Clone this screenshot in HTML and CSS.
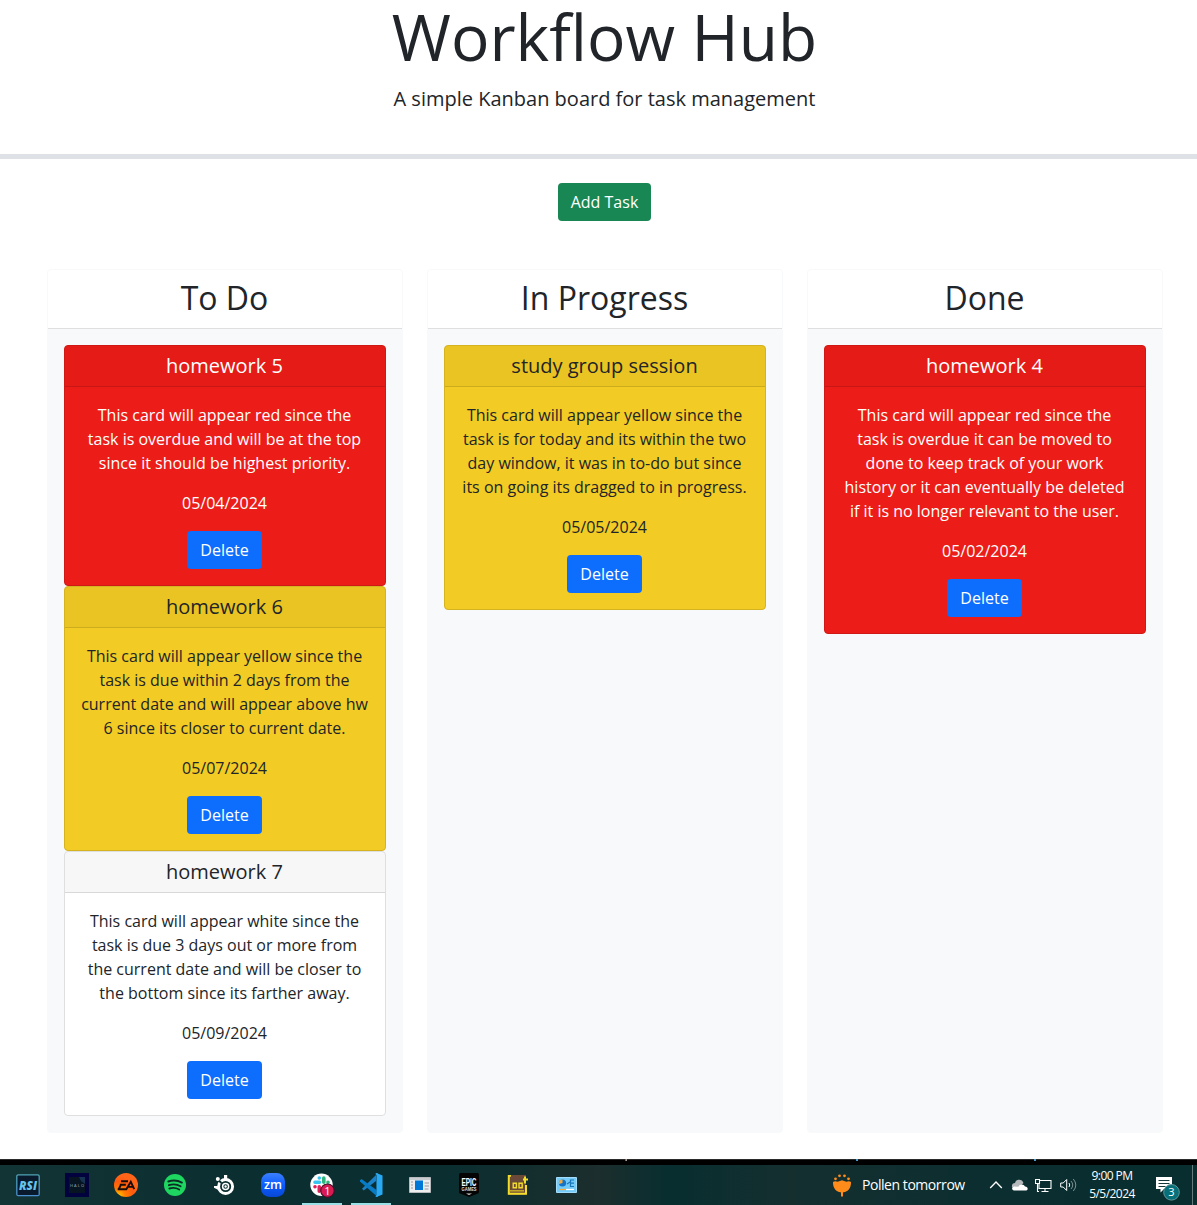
FILE: index.html
```html
<!DOCTYPE html>
<html lang="en">
<head>
<meta charset="utf-8">
<title>Workflow Hub</title>
<link rel="stylesheet" href="styles.css">
</head>
<body>
<main class="page">
  <header class="hero">
    <h1>Workflow Hub</h1>
    <p>A simple Kanban board for task management</p>
  </header>
  <div class="actions"><button class="btn btn-add">Add Task</button></div>
  <section class="board">
    <div class="lane">
      <h2>To Do</h2>
      <div class="lane-body">
        <article class="card overdue">
          <h4>homework 5</h4>
          <div class="card-body">
            <p>This card will appear red since the<br>task is overdue and will be at the top<br>since it should be highest priority.</p>
            <p>05/04/2024</p>
            <button class="btn btn-delete">Delete</button>
          </div>
        </article>
        <article class="card soon">
          <h4>homework 6</h4>
          <div class="card-body">
            <p>This card will appear yellow since the<br>task is due within 2 days from the<br>current date and will appear above hw<br>6 since its closer to current date.</p>
            <p>05/07/2024</p>
            <button class="btn btn-delete">Delete</button>
          </div>
        </article>
        <article class="card">
          <h4>homework 7</h4>
          <div class="card-body">
            <p>This card will appear white since the<br>task is due 3 days out or more from<br>the current date and will be closer to<br>the bottom since its farther away.</p>
            <p>05/09/2024</p>
            <button class="btn btn-delete">Delete</button>
          </div>
        </article>
      </div>
    </div>
    <div class="lane">
      <h2>In Progress</h2>
      <div class="lane-body">
        <article class="card soon">
          <h4>study group session</h4>
          <div class="card-body">
            <p>This card will appear yellow since the<br>task is for today and its within the two<br>day window, it was in to-do but since<br>its on going its dragged to in progress.</p>
            <p>05/05/2024</p>
            <button class="btn btn-delete">Delete</button>
          </div>
        </article>
      </div>
    </div>
    <div class="lane">
      <h2>Done</h2>
      <div class="lane-body">
        <article class="card overdue">
          <h4>homework 4</h4>
          <div class="card-body">
            <p>This card will appear red since the<br>task is overdue it can be moved to<br>done to keep track of your work<br>history or it can eventually be deleted<br>if it is no longer relevant to the user.</p>
            <p>05/02/2024</p>
            <button class="btn btn-delete">Delete</button>
          </div>
        </article>
      </div>
    </div>
  </section>
</main>
<footer class="taskbar">
  <div class="apps">
    <div class="app"><svg width="24" height="24" viewBox="0 0 24 24"><defs><linearGradient id="rsi" x2="0" y2="1"><stop offset="0" stop-color="#4fa3b5"/><stop offset="1" stop-color="#4a8fd0"/></linearGradient></defs><rect x=".8" y="1.8" width="22.4" height="20.9" rx="1.5" fill="#081a2c" stroke="url(#rsi)" stroke-width="1.3"/><text x="3" y="16.6" class="rsi" textLength="18" lengthAdjust="spacingAndGlyphs">RSI</text></svg></div>
    <div class="app"><svg width="24" height="24" viewBox="0 0 24 24"><path fill="#02023f" d="M0 0h24v24H0z"/><path fill="#071421" d="M4 4h16v16H4z"/><path fill="#163451" d="M14 4h6v7l-4-3z"/><text x="5" y="13.5" class="halo" textLength="14">HALO</text></svg></div>
    <div class="app"><svg width="24" height="24" viewBox="0 0 24 24"><defs><radialGradient id="ea" cx=".2" cy=".95" r=".8"><stop offset="0" stop-color="#ffc400"/><stop offset=".35" stop-color="#ff7a00"/><stop offset=".75" stop-color="#ff5a10"/><stop offset="1" stop-color="#ff6418"/></radialGradient></defs><circle cx="12" cy="12" r="12" fill="url(#ea)"/><path d="M7 8.2h7M5.8 11.7h6M3.7 16.2h8.6l4.5-7.4 3.4 7.4M13.8 13.9h4.8M6.6 12.5l-1.7 3.2" fill="none" stroke="#190d0a" stroke-width="1.9"/></svg></div>
    <div class="app"><svg width="22" height="22" viewBox="0 0 22 22"><circle cx="11" cy="11" r="11" fill="#1ed760"/><path d="M4.3 7.5c5-1.6 9.8-1 13.6 1.1M4.9 11.2c4.1-1.3 8.4-.8 11.7 1.1M5.4 14.5c3.5-1 7-.6 9.8 1" fill="none" stroke="#0c2d24" stroke-width="1.9" stroke-linecap="round"/></svg></div>
    <div class="app"><svg width="24" height="24" viewBox="0 0 24 24"><g fill="none" stroke="#fff"><circle cx="13.6" cy="13.5" r="7" stroke-width="2.9"/><circle cx="13.6" cy="13.5" r="3" stroke-width="1.5"/></g><circle cx="13.6" cy="13.5" r="1.2" fill="#fff"/><path fill="#fff" d="M12 2h3.2v5H12zM2 13h4l3 4-3-.3-4-2z"/><path d="m6 6.8 3.5 3.2" stroke="#0b2e30" stroke-width="2"/><circle cx="5.8" cy="6.100" r="2" fill="#fff"/></svg></div>
    <div class="app"><svg width="24" height="24" viewBox="0 0 24 24"><defs><linearGradient id="zm" x2="0" y2="1"><stop offset="0" stop-color="#3d80ff"/><stop offset=".5" stop-color="#0b5cff"/><stop offset="1" stop-color="#0847d5"/></linearGradient></defs><rect width="24" height="24" rx="8.5" fill="url(#zm)"/><text x="3" y="15.8" class="zm" textLength="18" lengthAdjust="spacingAndGlyphs">zm</text></svg></div>
    <div class="app active"><svg width="26" height="26" viewBox="0 0 26 26"><circle cx="12.5" cy="12.8" r="11.2" fill="#fff"/><g stroke-width="3.6" stroke-linecap="round" fill="none"><path d="M10.300 6v0M6 10.300h4.500" stroke="#36c5f0"/><path d="M14.800 6v4.300M19 10.300v0" stroke="#2eb67d"/><path d="M10.300 14.800v4.500M6 14.800v0" stroke="#e01e5a"/><path d="M14.800 14.800h4.200" stroke="#ecb22e"/></g><circle cx="18.500" cy="18.700" r="6.700" fill="#d81b55" stroke="#3b1026" stroke-width="1.100"/><text x="18.400" y="22.600" class="badge-text">1</text></svg></div>
    <div class="app active"><svg width="24" height="24" viewBox="0 0 24 24"><path d="M3 15.8 17 2v6L4.7 17.5z" fill="#1a80c8"/><path d="M.8 7.5 2.5 6 17.5 17v6L1 8.5z" fill="#087bc7"/><path d="M17.5.1 23.5 2.5v19l-6 2.4-1.3-.7 1.700-1.200V2L16.200.9z" fill="#29a9f3"/><path d="M17.500 0h1v24h-1z" fill="#29a9f3"/></svg></div>
    <div class="app"><svg width="22" height="16" viewBox="0 0 22 16"><path fill="#eee" stroke="#b6babd" d="M.5.5h21v15H.5z"/><path fill="#c9cdcf" d="M1 1h20v2H1z"/><path fill="#0078d7" d="M6 3.500h8V13H6z"/><path d="M2 5h2M2 8h2M2 11h2M15.500 6h4.500M15.500 9h4.500M15.500 12h4" stroke="#949da1"/></svg></div>
    <div class="app"><svg width="22" height="24" viewBox="0 0 22 24"><path fill="#050505" d="M2.500 0h17Q21 0 21 1.500V19q0 1-1 1.500L11 24l-9-3.500Q1 20 1 19V1.500Q1 0 2.500 0z"/><text x="3.500" y="12.500" class="epic" textLength="15" lengthAdjust="spacingAndGlyphs">EPIC</text><text x="3.600" y="17.800" class="games" textLength="15" lengthAdjust="spacingAndGlyphs">GAMES</text><path d="M8 20.500h6l-3 1.400z" fill="#ddd"/></svg></div>
    <div class="app"><svg width="22" height="20" viewBox="0 0 22 20"><path fill="#6b4938" d="M1 0h18v20H1z"/><path d="M1.800 0v18.700H19V10M1 .8h3M16 4.500h5M18 1.500v7" fill="none" stroke="#f2dd2b" stroke-width="2"/><path d="M3 15.800h14" stroke="#c8ad25" stroke-width="1.500"/><path d="M6.200 8.200h3.200v4.500H6.200zM12 8.200h3.200v4.500H12z" fill="none" stroke="#f2dd2b" stroke-width="1.400"/></svg></div>
    <div class="app"><svg width="21" height="16" viewBox="0 0 21 16"><path fill="#74cbf7" stroke="#a1ddfa" d="M.5.5h20v15H.5z"/><circle cx="6.500" cy="6" r="3.600" fill="#1474c7"/><path d="M6.500 6V2.400A3.600 3.600 0 0 0 3 7z" fill="#f7a93b"/><path d="M11 7l3-2M18 3h-3.500v6.500H18M14.500 6.200H18" fill="none" stroke="#1b79bb" stroke-width="1.200"/><path d="M3 12.500h6" stroke="#f7a93b" stroke-width="1.200"/><path d="M10 12.500h8" stroke="#fff" stroke-width="1.200"/></svg></div>
  </div>
  <div class="weather">
    <svg width="18" height="23" viewBox="0 0 18 23"><g fill="#ff8c1a"><path d="M0 8q2-1.500 4.700-.2L9 6.300l4.300 1.500q2.700-1.300 4.700.2c.2 6.500-3.500 10.500-9 10.500S-.2 14.500 0 8z"/><path d="M8 17h2v5.500H8z"/><circle cx="2.500" cy="4.800" r="1.400"/><circle cx="6.500" cy="1.800" r="1.400"/><circle cx="11.500" cy="1.800" r="1.400"/><circle cx="15.500" cy="4.800" r="1.400"/></g></svg>
    <span>Pollen tomorrow</span>
  </div>
  <div class="tray">
    <svg width="14" height="16" viewBox="0 0 14 16"><path d="m1.200 11 5.800-6 5.800 6" fill="none" stroke="#fff" stroke-width="1.300"/></svg>
    <svg width="17" height="16" viewBox="0 0 17 16"><path fill="#b5b9bb" d="M1 10C.5 7.500 2 6 4 6c1-4.500 7.500-4.500 8.500 0L6 12H3z"/><path fill="#fff" d="M3 13.500c-2 0-3-3 0-4l4.500.2c1-3 5.500-3 6.500-.2 3.500.3 3.500 4 .5 4z"/></svg>
    <svg width="17" height="16" viewBox="0 0 17 16"><path d="M5 3.500h11v8H4V7M10 12v2.500M6.500 14.500h7M.5 2.500h4v4h-4zM2.500 6.500v8H4" fill="none" stroke="#fff" stroke-width="1.100"/></svg>
    <svg width="17" height="16" viewBox="0 0 17 16"><path d="M.7 6h2.500l3.500-3.500v11L3.200 10H.7zM9 6q1.500 2 0 4" fill="none" stroke="#fff"/><path d="M11 4q3.500 4 0 8M13.300 2q5 6 0 12" fill="none" stroke="#7d9092"/></svg>
  </div>
  <div class="clock"><span>9:00 PM</span><span>5/5/2024</span></div>
  <svg class="notify" width="26" height="26" viewBox="0 0 26 26"><path fill="#fff" d="M1 2h16v12H9l-3.500 3.500V14H1z"/><path d="M3.500 5.500h11M3.500 8.500h11M3.500 11.500h7" stroke="#17383a"/><circle cx="16.500" cy="17.300" r="7.800" fill="#087078" stroke="#62989c"/><text x="16.500" y="21.300" class="badge-text">3</text></svg>
</footer>
</body>
</html>
```
FILE: styles.css
```css
* { box-sizing: border-box; }
body {
  margin: 0;
  height: 1205px;
  overflow: hidden;
  display: flex;
  flex-direction: column;
  font: 16px/24px "Open Sans", "Noto Sans", sans-serif;
  color: #212529;
  background: #fff;
}
h1, h2, h4, p { margin: 0; }
.page { height: 1159px; flex: none; text-align: center; }
.hero { height: 159px; padding-left: 12px; border-bottom: 5px solid #dee2e6; }
.hero h1 { font-size: 64px; line-height: 73px; font-weight: 400; }
.hero p { font-size: 20px; line-height: 30px; margin-top: 11px; }
.actions { padding: 24px 0 0 12px; height: 110px; }
.btn {
  display: inline-block;
  height: 38px;
  padding: 6px 12px;
  border: 1px solid transparent;
  border-radius: 4px;
  font: inherit;
  color: #fff;
  vertical-align: top;
}
.btn-add { background: #198754; }
.btn-delete { background: #0d6efd; }
.board {
  display: grid;
  grid-template-columns: repeat(3, 1fr);
  gap: 24px;
  height: 864px;
  padding: 0 34px 0 47px;
}
.lane { background: #f8f9fa; border: 1px solid #f8f9fa; border-radius: 4px; overflow: hidden; }
.lane h2 {
  height: 59px;
  padding: 9px 1px 0 0;
  background: #fff;
  border-bottom: 1px solid #dfdfdf;
  font-size: 32px;
  line-height: 38px;
  font-weight: 400;
}
.lane-body { padding: 16px; }
.card { background: #fff; border: 1px solid #dfdfdf; border-radius: 4px; overflow: hidden; }
.card h4 {
  height: 41px;
  padding: 8px 1px 8px 0;
  font-size: 20px;
  line-height: 24px;
  font-weight: 400;
  background: rgba(0, 0, 0, .03);
  border-bottom: 1px solid rgba(0, 0, 0, .125);
}
.card-body { padding: 16px 1px 16px 0; }
.card-body p { margin-bottom: 16px; }
.overdue { background: #ec1c18; border-color: #cf1915; color: #fff; }
.soon { background: #f2cb24; border-color: #d4b220; }

.taskbar {
  height: 46px;
  flex: none;
  display: flex;
  align-items: center;
  padding: 6px 0 0 3px;
  background:
    linear-gradient(#4a9cc8, #4a9cc8) 856px 0 / 2px 2px no-repeat,
    linear-gradient(#4a9cc8, #4a9cc8) 1034px 0 / 2px 2px no-repeat,
    linear-gradient(90deg, #3548a8, #d8b48c) 625px 0 / 2px 2px no-repeat,
    linear-gradient(#2b2b2b 1px, #000 1px) 0 0 / 100% 6px no-repeat,
    linear-gradient(#667b7c, #667b7c) 1192px 6px / 1px 40px no-repeat,
    linear-gradient(90deg, #133435, #0b2e30 20%, #0b2e30 38%, #1c2e2d 50%, #082e30 56%, #152f2f 66%, #0c2e30 82%, #082e30);
  color: #fff;
}
.apps { display: flex; height: 40px; }
.app { width: 49px; height: 40px; display: flex; align-items: center; justify-content: center; }
.active { background: linear-gradient(#9adfe5, #9adfe5) 50% 100% / 40px 2px no-repeat; }
.weather { margin-left: 242px; width: 156px; display: flex; gap: 11px; align-items: center; font-size: 14px; white-space: nowrap; letter-spacing: -.45px; }
.tray { display: flex; gap: 8px; width: 100px; align-items: center; }
.tray svg, .weather svg, .notify { flex: none; }
.tray svg:nth-child(2) { margin-right: -1px; }
.clock { width: 46px; display: flex; flex-direction: column; align-items: center; font-size: 12px; line-height: 18px; letter-spacing: -.55px; white-space: nowrap; margin-top: -1px; }
.notify { margin: 5px 0 0 20px; }
.rsi { font: italic 800 12px "Open Sans", sans-serif; fill: #66c3eb; }
.halo { font: 4px "Open Sans", sans-serif; fill: #9bb4c4; }
.zm { font: 600 12px "Open Sans", sans-serif; fill: #fff; }
.epic { font: bold 11px "Liberation Sans", sans-serif; fill: #fff; }
.games { font: bold 5px "Liberation Sans", sans-serif; fill: #ddd; }
.badge-text { font: 11px "Open Sans", sans-serif; fill: #fff; text-anchor: middle; }
```
